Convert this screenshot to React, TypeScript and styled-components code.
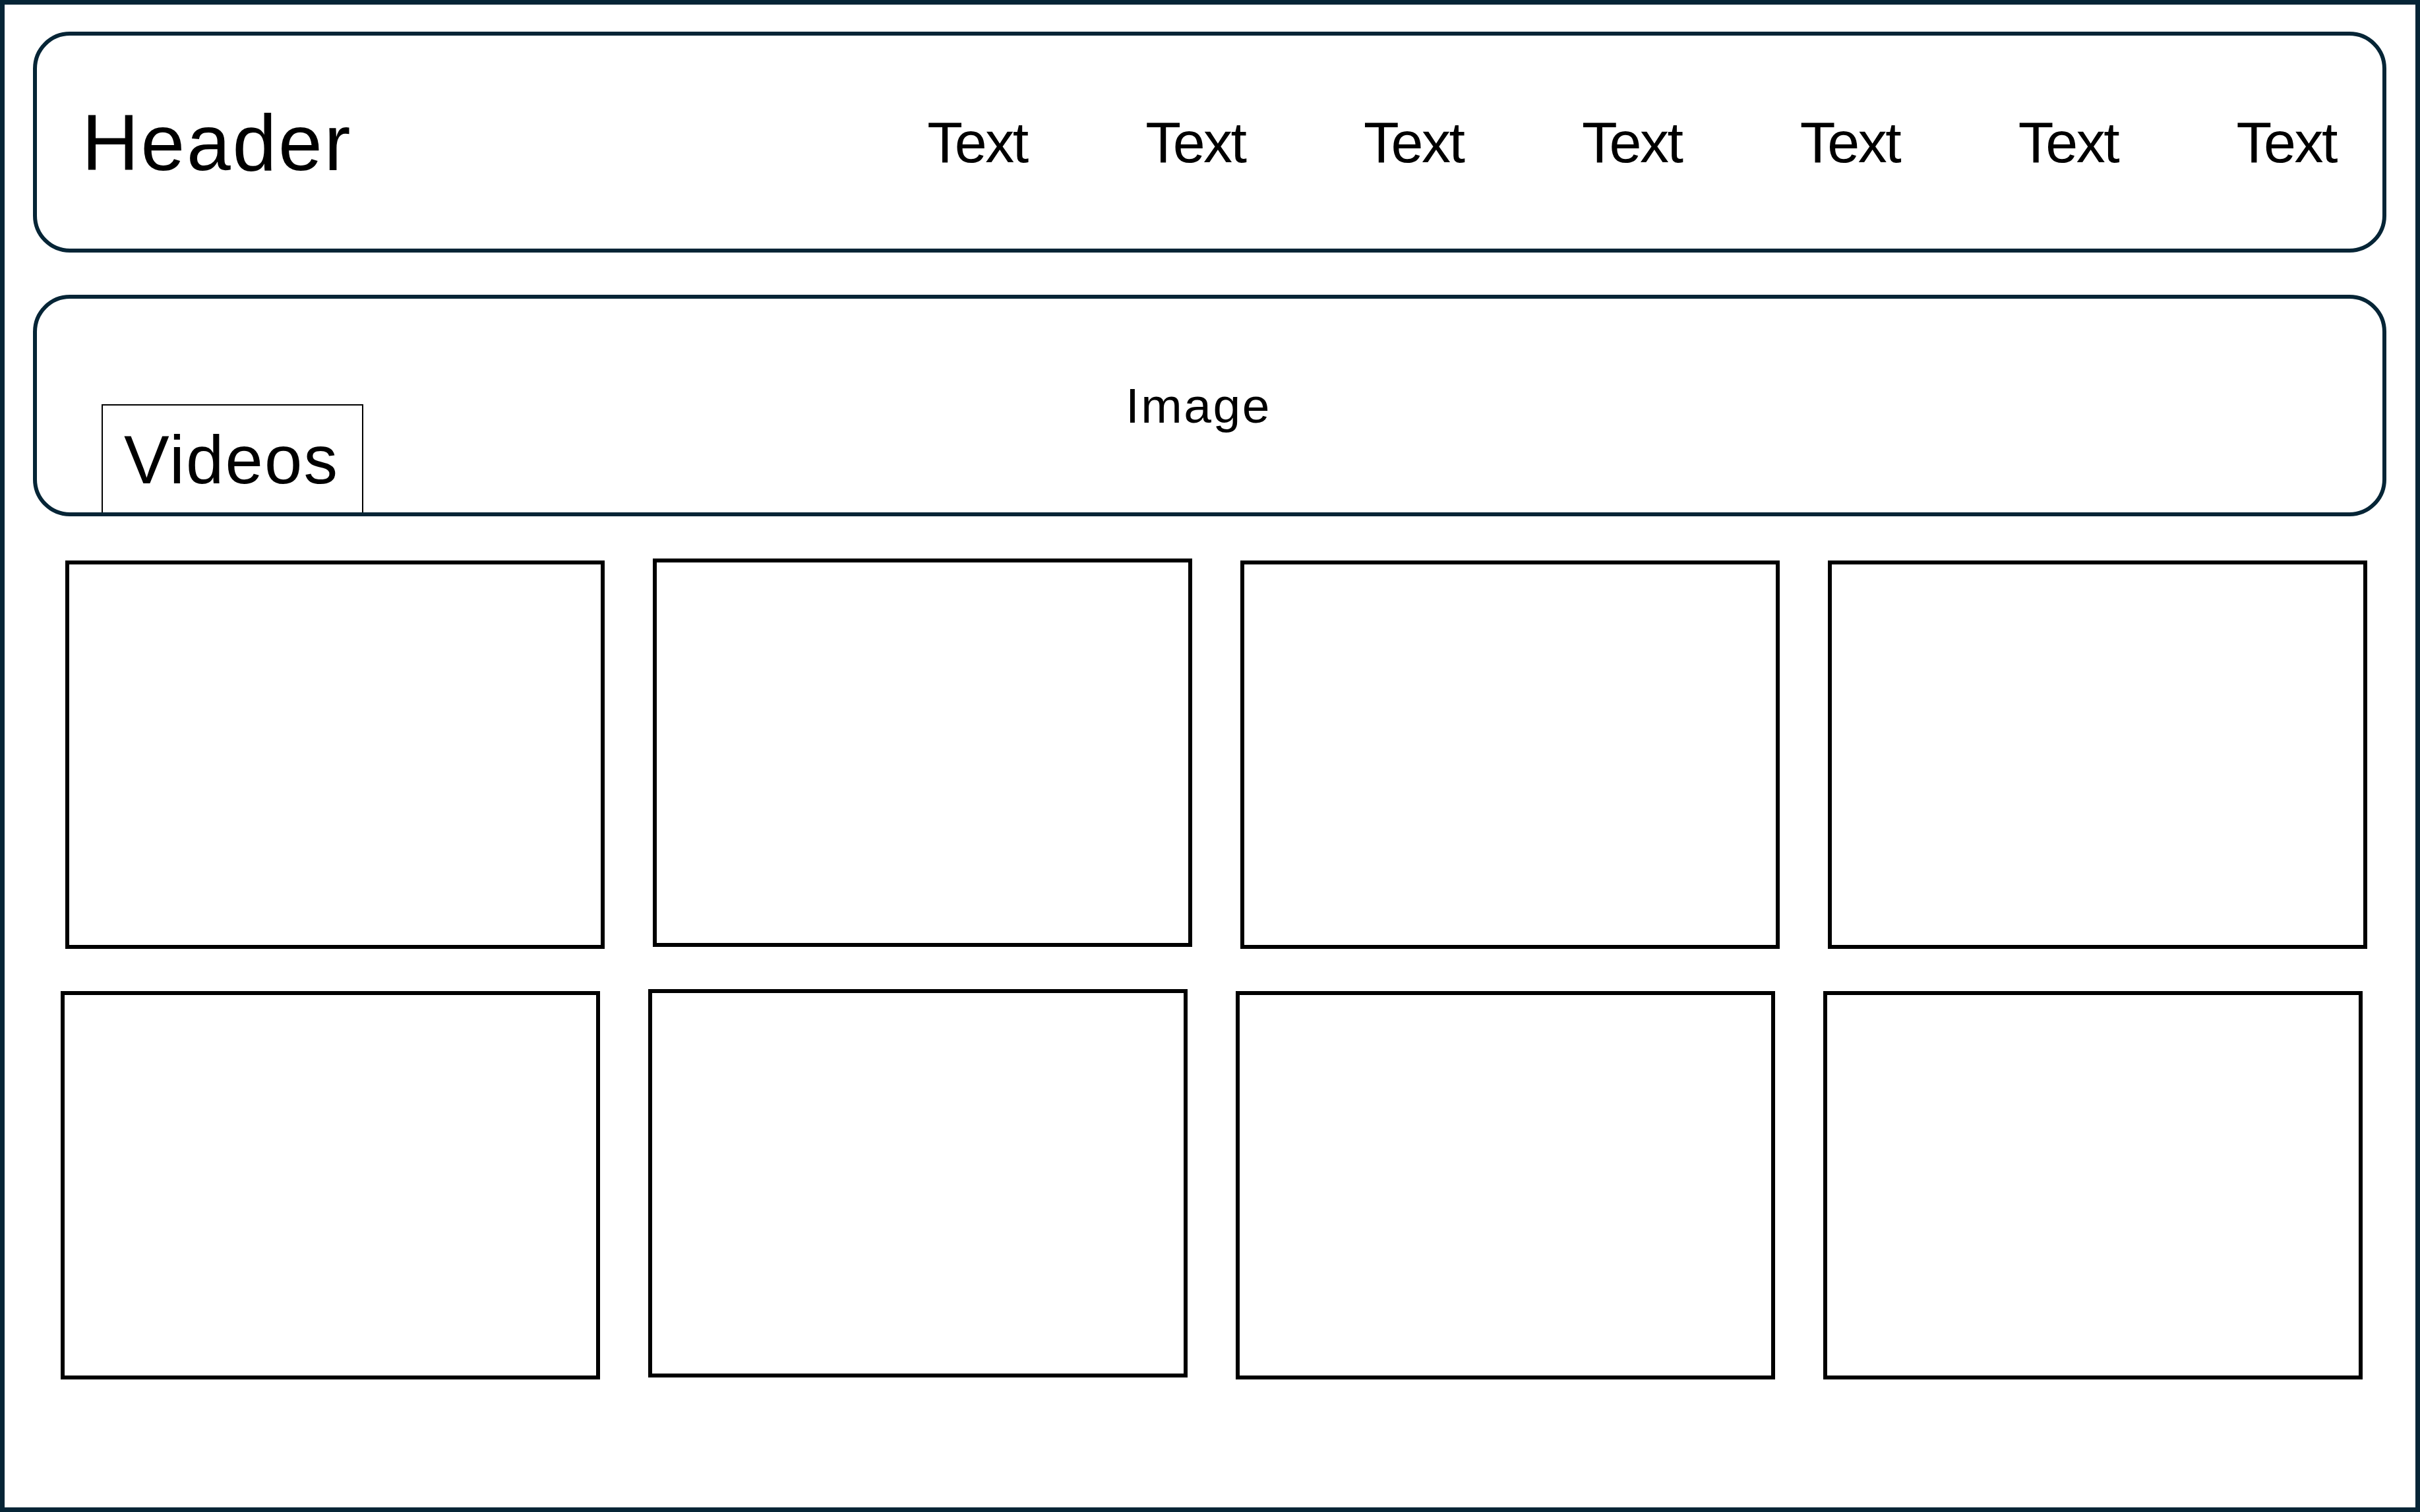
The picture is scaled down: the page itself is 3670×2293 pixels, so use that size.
import React from "react";
import styled, { createGlobalStyle } from "styled-components";

const NAVY = "#062536";

const GlobalStyle = createGlobalStyle`
  html, body {
    margin: 0;
    padding: 0;
    background: #ffffff;
  }
  body {
    font-family: "Liberation Sans", Arial, sans-serif;
    color: #000000;
  }
  * {
    box-sizing: border-box;
  }
`;

const Page = styled.div`
  width: 3670px;
  height: 2293px;
  border: 7px solid ${NAVY};
  padding: 41px 44px 0 43px;
  display: flex;
  flex-direction: column;
  background: #ffffff;
  overflow: hidden;
`;

const HeaderBar = styled.header`
  height: 335px;
  border: 6px solid ${NAVY};
  border-radius: 56px;
  display: flex;
  align-items: center;
  justify-content: space-between;
  padding: 0 70px 0 68px;
`;

const Title = styled.h1`
  margin: 0;
  font-size: 120px;
  font-weight: 400;
  letter-spacing: 2.8px;
  line-height: 1.15;
`;

const Nav = styled.nav`
  display: flex;
  align-items: center;
  gap: 179.5px;
`;

const NavItem = styled.span`
  font-size: 88px;
  letter-spacing: -2.5px;
  line-height: 1.15;
`;

const Hero = styled.section`
  position: relative;
  margin-top: 64px;
  height: 336px;
  border: 6px solid ${NAVY};
  border-radius: 56px;
  display: flex;
  align-items: center;
  justify-content: center;
  padding-right: 34px;
`;

const ImageLabel = styled.span`
  font-size: 75px;
  letter-spacing: 2.5px;
  line-height: 1.15;
`;

const VideosTab = styled.div`
  position: absolute;
  left: 98px;
  bottom: 0;
  width: 397px;
  height: 164px;
  border: 2px solid #000000;
  border-bottom: none;
  background: #ffffff;
  padding: 31px 0 0 32px;
  font-size: 103px;
  letter-spacing: 2.2px;
  line-height: 1;
`;

const Grid = styled.div`
  margin-top: 67px;
  display: flex;
  flex-direction: column;
  gap: 64px;
`;

const Row = styled.div<{ $offset: number }>`
  display: flex;
  align-items: flex-start;
  gap: 73px;
  padding-left: ${(p) => p.$offset}px;
`;

const Card = styled.div<{ $raised?: boolean }>`
  width: 818px;
  height: 589px;
  border: 6px solid #000000;
  background: #ffffff;
  margin-top: ${(p) => (p.$raised ? "-3px" : "0")};
`;

const navItems = ["Text", "Text", "Text", "Text", "Text", "Text", "Text"];
const rows = [
  { offset: 49, cards: [false, true, false, false] },
  { offset: 42, cards: [false, true, false, false] },
];

export default function App() {
  return (
    <>
      <GlobalStyle />
      <Page>
        <HeaderBar>
          <Title>Header</Title>
          <Nav>
            {navItems.map((t, i) => (
              <NavItem key={i}>{t}</NavItem>
            ))}
          </Nav>
        </HeaderBar>
        <Hero>
          <ImageLabel>Image</ImageLabel>
          <VideosTab>Videos</VideosTab>
        </Hero>
        <Grid>
          {rows.map((r, ri) => (
            <Row key={ri} $offset={r.offset}>
              {r.cards.map((raised, ci) => (
                <Card key={ci} $raised={raised} />
              ))}
            </Row>
          ))}
        </Grid>
      </Page>
    </>
  );
}
